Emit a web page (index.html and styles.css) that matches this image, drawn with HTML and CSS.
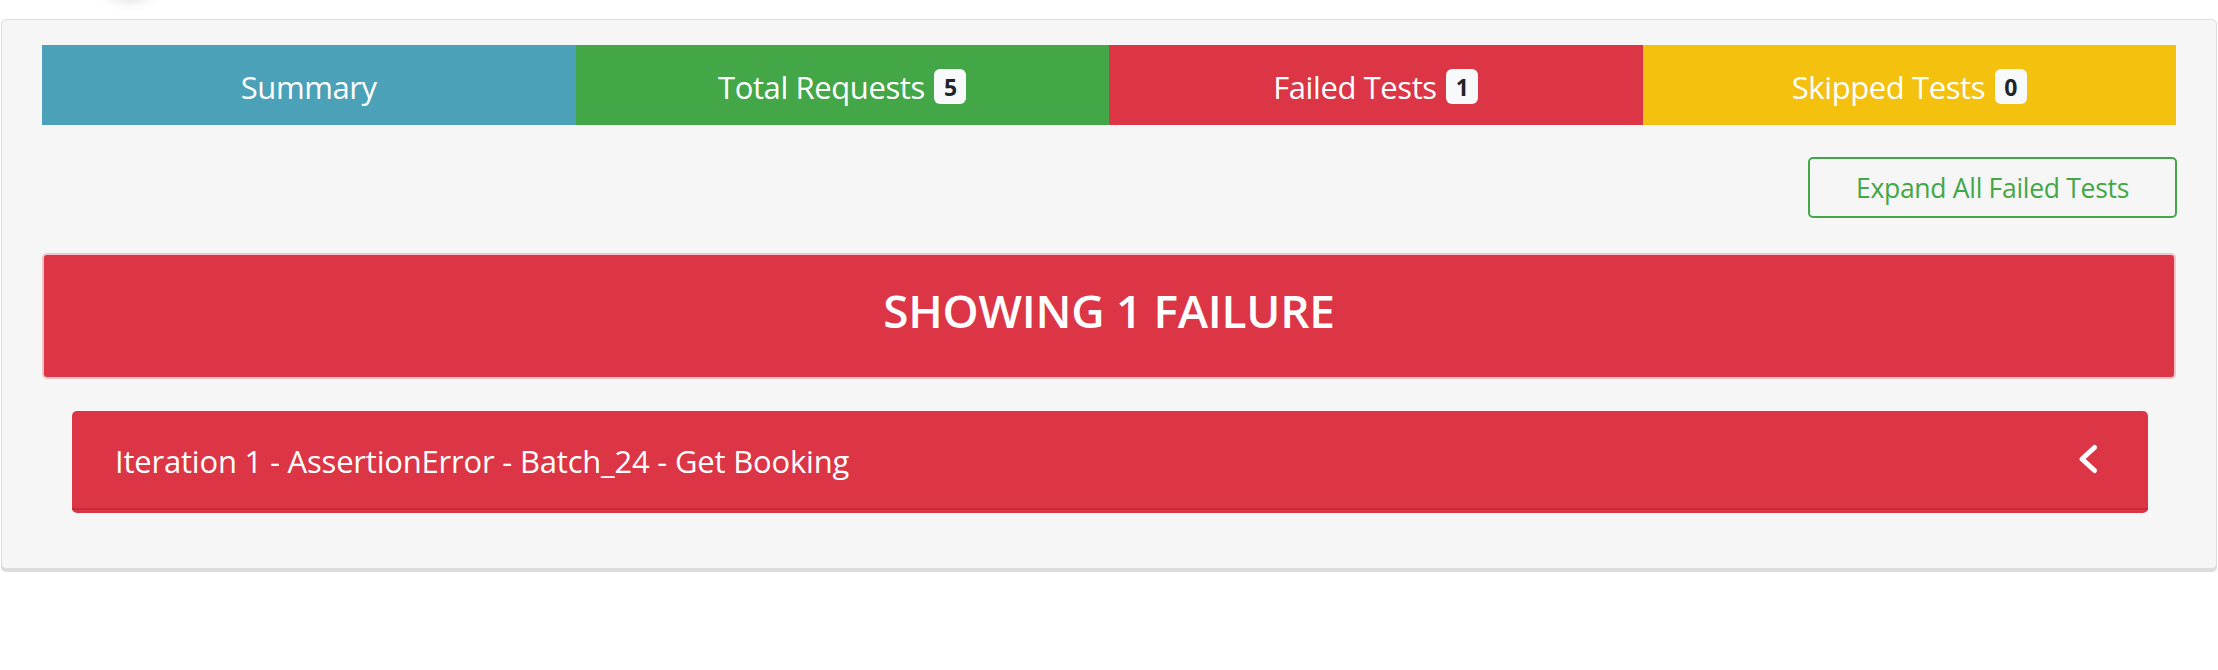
FILE: index.html
```html
<!DOCTYPE html>
<html lang="en">
<head>
<meta charset="utf-8">
<title>Failed Tests</title>
<link rel="stylesheet" href="styles.css">
</head>
<body>
<div class="page">
  <div class="avatar-shadow"></div>
  <div class="panel">
    <div class="tabs">
      <div class="tab tab-summary">Summary</div>
      <div class="tab tab-total">Total Requests <span class="badge">5</span></div>
      <div class="tab tab-failed">Failed Tests <span class="badge">1</span></div>
      <div class="tab tab-skipped">Skipped Tests <span class="badge">0</span></div>
    </div>
    <div class="actions">
      <button class="btn-expand" type="button">Expand All Failed Tests</button>
    </div>
    <div class="fail-banner">
      <h2 class="fail-banner-title">SHOWING 1 FAILURE</h2>
    </div>
    <div class="fail-card">
      <div class="fail-card-head">
        <span class="fail-card-title">Iteration 1 - AssertionError - Batch_24 - Get Booking</span>
        <svg class="chevron" width="20" height="30" viewBox="0 0 20 30" aria-hidden="true">
          <polyline points="16.5,3.5 4,15 16.5,26.5" fill="none" stroke="#ffffff" stroke-width="5" stroke-linecap="round" stroke-linejoin="round"/>
        </svg>
      </div>
    </div>
  </div>
</div>
</body>
</html>
```
FILE: styles.css
```css
* {
  box-sizing: border-box;
}

html, body {
  margin: 0;
  padding: 0;
  background: #ffffff;
}

body {
  font-family: "Open Sans", "Noto Sans", "DejaVu Sans", sans-serif;
  color: #212529;
}

.page {
  position: relative;
  padding: 19px 1px 0 1px;
  overflow: hidden;
  height: 670px;
}

.avatar-shadow {
  position: absolute;
  left: 92px;
  top: -78px;
  width: 76px;
  height: 76px;
  border-radius: 50%;
  background: #ffffff;
  box-shadow: 0 4px 12px rgba(0, 0, 0, 0.12);
}

.panel {
  background: #f6f6f6;
  border: 1px solid #dddddd;
  border-radius: 5px;
  box-shadow: 0 3px 0 #dcdcdc;
  padding: 25px 40px 55px 40px;
}

.tabs {
  display: grid;
  grid-template-columns: repeat(4, 1fr);
  height: 80px;
}

.tab {
  display: flex;
  align-items: center;
  justify-content: center;
  padding-top: 3px;
  color: #ffffff;
  font-size: 31px;
  letter-spacing: -0.4px;
  white-space: pre;
}

.tab-summary { background: #4aa1b8; }
.tab-total { background: #43a747; }
.tab-failed { background: #dc3545; }
.tab-skipped { background: #f4c10f; }

.badge {
  display: inline-flex;
  align-items: center;
  justify-content: center;
  margin-left: 2px;
  width: 32px;
  height: 35px;
  border-radius: 6px;
  background: #f8f9fa;
  color: #212529;
  font-size: 23px;
  font-weight: 700;
  letter-spacing: 0;
  position: relative;
  top: 0;
}

.actions {
  display: flex;
  justify-content: flex-end;
  margin-top: 32px;
}

.btn-expand {
  height: 61px;
  width: 369px;
  margin-right: -1px;
  border: 2px solid #43a747;
  border-radius: 5px;
  background: transparent;
  color: #43a747;
  font-family: "Open Sans", "Noto Sans", sans-serif;
  font-size: 26.5px;
  letter-spacing: -0.3px;
  padding: 0 0 0 0;
}

.fail-banner {
  margin-top: 35px;
  height: 126px;
  border: 2px solid #f3c3c8;
  border-radius: 5px;
  background: #dc3545;
  display: flex;
  align-items: center;
  justify-content: center;
  padding-bottom: 12px;
}

.fail-banner-title {
  margin: 0;
  color: #ffffff;
  font-size: 46px;
  font-weight: 600;
  letter-spacing: -0.3px;
}

.fail-card {
  margin: 32px 28px 0 30px;
  background: #dc3545;
  border-radius: 5px;
  padding-bottom: 3px;
}

.fail-card-head {
  height: 99px;
  border-bottom: 2px solid #c42c3a;
  display: flex;
  align-items: center;
  justify-content: space-between;
  padding: 3px 50px 0 43px;
}

.fail-card-title {
  color: #ffffff;
  font-size: 31px;
  letter-spacing: -0.2px;
}

.chevron {
  display: block;
  position: relative;
  top: -2px;
}
```
